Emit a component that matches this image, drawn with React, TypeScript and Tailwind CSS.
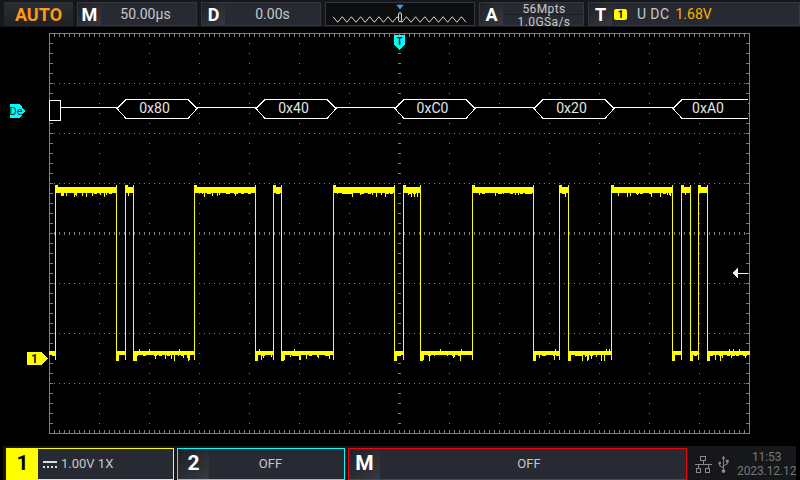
import React from 'react';
import { FaUsb } from 'react-icons/fa';

const edges = [55, 116, 125, 133, 194, 255, 273, 281, 333, 394, 403, 420, 472, 533, 559, 568, 611, 672, 681, 690, 698, 707];
const packets = [
  { label: '0x80', x: 117, end: 197 },
  { label: '0x40', x: 256, end: 336 },
  { label: '0xC0', x: 395, end: 475 },
  { label: '0x20', x: 534, end: 614 },
];

const range = (from: number, to: number, step: number) => {
  const out: number[] = [];
  for (let v = from; v <= to; v += step) out.push(v);
  return out;
};

// small repeatable noise so the trace looks the same on every render
const seeded = (seed: number) => () => {
  seed = (seed * 1664525 + 1013904223) % 4294967296;
  return seed / 4294967296;
};

const Trace: React.FC = () => {
  const rand = seeded(77);
  const bits: { x: number; y: number; w: number; h: number }[] = [];
  const points = [49, ...edges, 749];
  points.slice(0, -1).forEach((from, i) => {
    const to = points[i + 1];
    const high = i % 2 === 1;
    const top = high ? 187 : 351;
    const h = high ? 6 : 4;
    bits.push({ x: from, y: top, w: to - from + 1, h });
    if (i > 0) {
      // the edge itself, then the overshoot where it lands
      bits.push({ x: from, y: 185, w: 1, h: 175 });
      if (high) bits.push({ x: from, y: 185, w: 3, h: 8 });
      else bits.push({ x: from, y: 351, w: 3, h: 10 });
    }
    for (let x = from + 3; x < to - 1; x++) {
      const r = rand();
      if (r < 0.2) bits.push({ x, y: top + h, w: 1, h: 1 + Math.floor(rand() * (high ? 4 : 6)) });
      else if (r < 0.3) bits.push({ x, y: top + h, w: 3, h: 1 });
      else if (!high && r < 0.36) bits.push({ x, y: top - 2, w: 1, h: 2 });
    }
  });
  return (
    <g fill="#ffff00">
      {bits.map((b, i) => (
        <rect key={i} x={b.x} y={b.y} width={b.w} height={b.h} />
      ))}
    </g>
  );
};

const Grid: React.FC = () => (
  <g fill="#808080">
    {range(99, 699, 50).filter((x) => x !== 399).map((x) =>
      range(43, 423, 10).map((y) => <rect key={`${x}-${y}`} x={x} y={y} width="1" height="1" />)
    )}
    {[83, 133, 183, 283, 333, 383].map((y) =>
      range(54, 744, 5).map((x) => <rect key={`h${y}-${x}`} x={x} y={y} width="1" height="1" />)
    )}
    {range(54, 744, 5).map((x) => (
      <rect key={`c${x}`} x={x} y={232} width="1" height="3" />
    ))}
    {range(43, 423, 10).map((y) => (
      <rect key={`m${y}`} x={398} y={y} width="3" height="1" />
    ))}
    {range(54, 744, 5).map((x) => (
      <React.Fragment key={`t${x}`}>
        <rect x={x} y={34} width="1" height="3" />
        <rect x={x} y={430} width="1" height="3" />
      </React.Fragment>
    ))}
    {range(43, 423, 10).map((y) => (
      <React.Fragment key={`s${y}`}>
        <rect x={50} y={y} width="3" height="1" />
        <rect x={746} y={y} width="3" height="1" />
      </React.Fragment>
    ))}
    <rect x={49} y={33} width="701" height="1" />
    <rect x={49} y={433} width="701" height="1" />
    <rect x={49} y={33} width="1" height="401" />
    <rect x={749} y={33} width="1" height="401" />
  </g>
);

const Decode: React.FC = () => (
  <g>
    <g fill="none" stroke="#ffffff" strokeWidth="1" shapeRendering="crispEdges">
      <rect x={49.5} y={100.5} width="11" height="20" fill="#000000" />
      <path d="M61 107.5H117M197 107.5H256M336 107.5H395M475 107.5H534M614 107.5H673" />
    </g>
    <g fill="#000000" stroke="#ffffff" strokeWidth="1">
      {packets.map((p) => (
        <path
          key={p.label}
          d={`M${p.x} 108.5L${p.x + 9} 99.5H${p.end - 9}L${p.end} 108.5L${p.end - 9} 118.5H${p.x + 9}Z`}
        />
      ))}
      <path d="M748 99.5H682L673 108.5L682 118.5H748" />
    </g>
    <g fill="#e4e4e4" fontSize="14" textAnchor="middle">
      {packets.map((p) => (
        <text key={p.label} x={(p.x + p.end) / 2 - 2.5} y={113}>{p.label}</text>
      ))}
      <text x={708} y={113}>0xA0</text>
    </g>
  </g>
);

const Letter: React.FC<{ children: React.ReactNode; footer?: boolean }> = ({ children, footer }) => (
  <div
    className={`shrink-0 flex items-center justify-center bg-linear-to-br from-[#1e2024] to-[#363940] text-white font-bold ${
      footer ? 'w-[31px] text-[21px]' : 'w-[23px] text-[18px]'
    }`}
  >
    {children}
  </div>
);

const TopPanel: React.FC<{ letter: string; value: string; valueClass?: string }> = ({ letter, value, valueClass }) => (
  <div className="w-[120px] h-[24px] shrink-0 flex border border-[#33363d] bg-[#272a32]">
    <Letter>{letter}</Letter>
    <div className={`flex-1 flex items-center justify-center text-[14px] text-[#c8c8c8] ${valueClass ?? ''}`}>{value}</div>
  </div>
);

const Overview: React.FC = () => {
  const zig = range(0, 29, 1).map((i) => `${327 + i * 5} ${i % 2 === 0 ? 17 : 23}`).join(' L');
  return (
    <svg className="w-[150px] h-[24px] shrink-0 bg-[#0d0e10] border border-[#33363d]" viewBox="325 2 150 24">
      <path d={`M${zig}`} fill="none" stroke="#e8e8e8" strokeWidth="1" />
      <rect x={398.5} y={12.5} width="3" height="10" rx="1.5" fill="#000000" stroke="#ffffff" />
      <path d="M396 4H404L400 9Z" fill="#3b9cf2" />
    </svg>
  );
};

const NetworkIcon: React.FC = () => (
  <svg className="shrink-0" width="17" height="19" viewBox="0 0 17 19" fill="none" stroke="#8a8a8a" strokeWidth="1" shapeRendering="crispEdges">
    <rect x="5.5" y="1.5" width="5" height="4" />
    <path d="M8.5 6V9M0 9.5H17M3.5 10V13M13.5 10V13" />
    <rect x="1.5" y="13.5" width="4" height="4" />
    <rect x="10.5" y="13.5" width="4" height="4" />
  </svg>
);

const App: React.FC = () => {
  return (
    <div className="w-[800px] h-[480px] flex flex-col bg-black overflow-hidden font-['Roboto',sans-serif]">
      <header className="h-[27px] shrink-0 flex items-start gap-[4px] pl-[4px] pt-[2px] bg-[#15171a]">
        <div className="w-[69px] h-[24px] shrink-0 flex items-center justify-center bg-linear-to-b from-[#2b2e34] to-[#1f2125] text-[#ff9a16] font-bold text-[18px]">
          AUTO
        </div>
        <TopPanel letter="M" value="50.00µs" valueClass="pr-[6px]" />
        <TopPanel letter="D" value="0.00s" />
        <Overview />
        <div className="w-[105px] h-[24px] shrink-0 flex border border-[#33363d] bg-[#272a32]">
          <Letter>A</Letter>
          <div className="flex-1 flex flex-col items-center pl-[2px] text-[12px] leading-[12px] text-[#c8c8c8] tracking-[0.4px]">
            <span className="h-[12px] border-b border-[#1c1e22] w-full text-center">56Mpts</span>
            <span className="mt-[1px]">1.0GSa/s</span>
          </div>
        </div>
        <div className="flex-1 h-[24px] flex items-center border border-[#33363d] bg-[#272a32]">
          <div className="self-stretch flex"><Letter>T</Letter></div>
          <span className="ml-[2px] w-[13px] h-[11px] flex items-center justify-center rounded-[2px] bg-[#ffff00] text-black text-[10px] font-bold">1</span>
          <span className="ml-[10px] text-[14px] text-[#c8c8c8] tracking-[0.4px]">U DC</span>
          <span className="ml-[6px] text-[14px] text-[#ffb000]">1.68V</span>
        </div>
      </header>

      <main className="flex-1 relative">
        <svg width="800" height="419" viewBox="0 27 800 419" className="block" shapeRendering="crispEdges">
          <Grid />
          <Trace />
          <Decode />
          <path d="M732 273L738 267.5V272.5H748V273.5H738V278.5Z" fill="#eeeeee" />
          {/* trigger marker */}
          <path d="M394 35H405V45L399.5 50L394 45Z" fill="#00ffff" />
          <text x={399.5} y={45} fontSize="10" fontWeight="700" textAnchor="middle" fill="#06343a">T</text>
          {/* decode channel tag */}
          <path d="M10 104H20L25 111L20 118H10Z" fill="#00ffff" />
          <text x={16} y={115} fontSize="11" textAnchor="middle" fill="#06343a">De</text>
          {/* channel 1 ground tag */}
          <path d="M27 352H42L48 358.5L42 365H27Z" fill="#ffff00" />
          <text x={34.5} y={363} fontSize="12" fontWeight="700" textAnchor="middle" fill="#222200">1</text>
        </svg>
      </main>

      <footer className="h-[34px] shrink-0 w-[793px] ml-[3px] flex gap-[3px] pl-[3px] pt-[2px] bg-[#15171a]">
        <div className="w-[168px] h-[32px] shrink-0 flex border border-[#ffff00] bg-[#272a32]">
          <div className="w-[31px] flex items-center justify-center bg-[#ffff00] text-black font-bold text-[21px]">1</div>
          <div className="flex-1 flex items-center pl-[5px] gap-[4px] text-[13px] text-[#c8c8c8]">
            <span className="flex flex-col gap-[3px] w-[14px]">
              <span className="h-[2px] bg-[#dddddd]" />
              <span className="border-t-2 border-dotted border-[#dddddd]" />
            </span>
            1.00V 1X
          </div>
        </div>
        <div className="w-[168px] h-[32px] shrink-0 flex border border-[#00ffff] bg-[#272a32]">
          <Letter footer>2</Letter>
          <div className="flex-1 flex items-center justify-center pr-[12px] text-[13px] text-[#c8c8c8]">OFF</div>
        </div>
        <div className="w-[339px] h-[32px] shrink-0 flex border border-[#f00014] bg-[#272a32]">
          <Letter footer>M</Letter>
          <div className="flex-1 flex items-center justify-center pr-[8px] text-[13px] text-[#c8c8c8]">OFF</div>
        </div>
        <div className="flex-1 flex items-center pl-[5px]">
          <NetworkIcon />
          <FaUsb className="shrink-0 ml-[3px] text-[#8a8a8a] -rotate-90" size={17} />
          <div className="ml-[5px] flex flex-col items-center shrink-0 text-[12px] leading-[14px] text-[#777777] tracking-[-0.1px]">
            <span>11:53</span>
            <span>2023.12.12</span>
          </div>
        </div>
      </footer>
    </div>
  );
};

export default App;
